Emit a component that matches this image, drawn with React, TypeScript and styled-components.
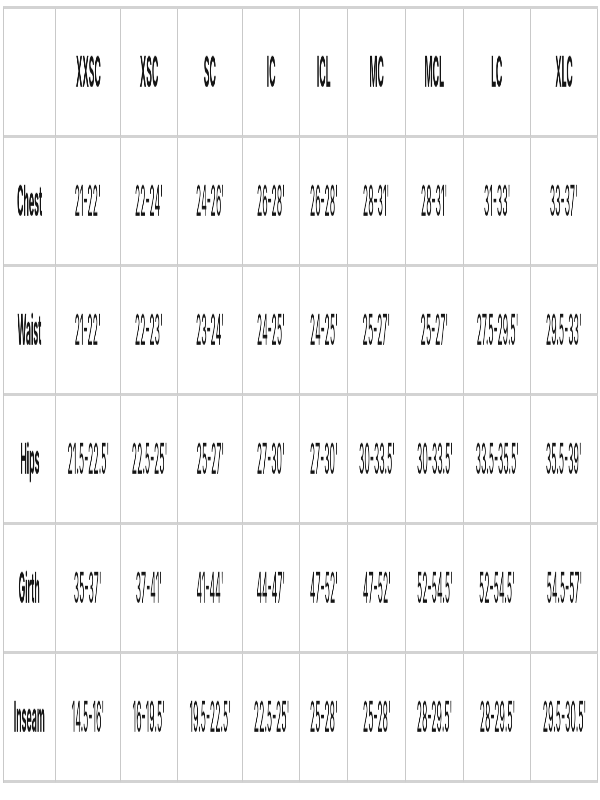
import React from 'react'
import styled, { createGlobalStyle } from 'styled-components'

const GlobalStyle = createGlobalStyle`
   html, body {
      margin: 0;
      padding: 0;
      background: #fff;
   }
   body {
      font-family: Inter, 'Liberation Sans', Arial, sans-serif;
      color: #141414;
      -webkit-font-smoothing: antialiased;
   }
`

const COLS = [52, 65, 57, 65, 57, 48, 58, 58, 67, 67]

const Page = styled.div`
   padding: 6px 0 0 3px;
`

const Grid = styled.div`
   display: grid;
   grid-template-columns: ${COLS.map((w) => `${w}px`).join(' ')};
   grid-auto-rows: 129px;
   width: max-content;
   border-top: 3px solid #d3d3d3;
   border-left: 1px solid #c9c9c9;
`

const Cell = styled.div`
   display: flex;
   align-items: center;
   justify-content: center;
   border-right: 1px solid #c9c9c9;
   border-bottom: 3px solid #d3d3d3;
`

const Label = styled.span<{ $bold?: boolean }>`
   display: inline-block;
   white-space: nowrap;
   font-size: 20px;
   line-height: 1;
   font-weight: ${(p) => (p.$bold ? 650 : 380)};
   transform: scale(0.44, 2.1);
   will-change: transform;
   letter-spacing: ${(p) => (p.$bold ? '-0.1px' : '0')};
`

const sizes = ['XXSC', 'XSC', 'SC', 'IC', 'ICL', 'MC', 'MCL', 'LC', 'XLC']

const rows: { name: string; values: string[] }[] = [
   { name: 'Chest', values: ["21-22'", "22-24'", "24-26'", "26-28'", "26-28'", "28-31'", "28-31'", "31-33'", "33-37'"] },
   { name: 'Waist', values: ["21-22'", "22-23'", "23-24'", "24-25'", "24-25'", "25-27'", "25-27'", "27.5-29.5'", "29.5-33'"] },
   { name: 'Hips', values: ["21.5-22.5'", "22.5-25'", "25-27'", "27-30'", "27-30'", "30-33.5'", "30-33.5'", "33.5-35.5'", "35.5-39'"] },
   { name: 'Girth', values: ["35-37'", "37-41'", "41-44'", "44-47'", "47-52'", "47-52'", "52-54.5'", "52-54.5'", "54.5-57'"] },
   { name: 'Inseam', values: ["14.5-16'", "16-19.5'", "19.5-22.5'", "22.5-25'", "25-28'", "25-28'", "28-29.5'", "28-29.5'", "29.5-30.5'"] },
]

const App: React.FC = () => {
   return (
      <>
         <GlobalStyle />
         <Page>
            <Grid>
               <Cell />
               {sizes.map((s) => (
                  <Cell key={s}>
                     <Label $bold>{s}</Label>
                  </Cell>
               ))}
               {rows.map((row) => (
                  <React.Fragment key={row.name}>
                     <Cell>
                        <Label $bold>{row.name}</Label>
                     </Cell>
                     {row.values.map((v, i) => (
                        <Cell key={i}>
                           <Label>{v}</Label>
                        </Cell>
                     ))}
                  </React.Fragment>
               ))}
            </Grid>
         </Page>
      </>
   )
}

export default App
